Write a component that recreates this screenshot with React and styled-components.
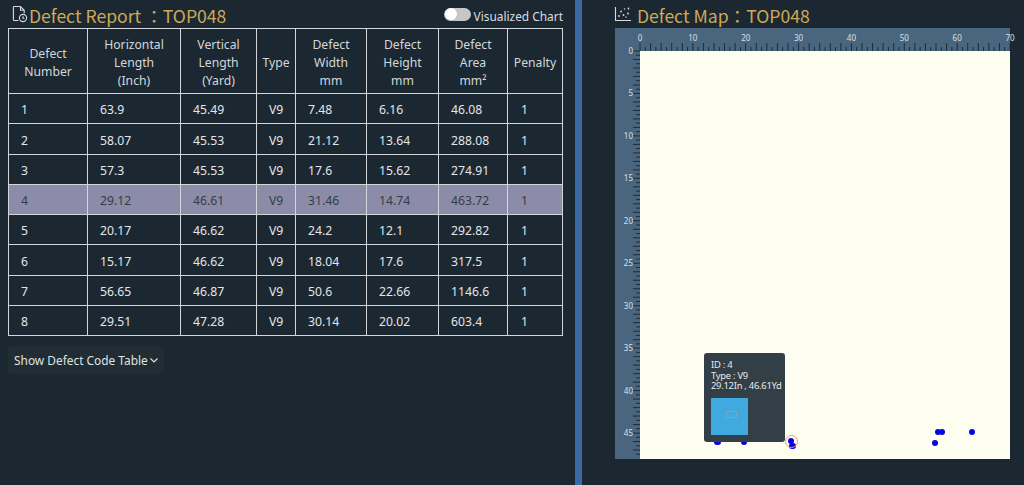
import React from "react";
import styled, { createGlobalStyle } from "styled-components";

const Global = createGlobalStyle`
  html, body { margin: 0; padding: 0; background: #1b2832; overflow: hidden; }
  body { font-family: "Noto Sans", "Noto Sans CJK TC", "Open Sans", sans-serif; }
`;

const Page = styled.div`
  display: flex;
  width: 1024px;
  height: 485px;
  background: #1b2832;
  color: #dfe3e6;
`;
const LeftPanel = styled.section`
  width: 575px;
  box-sizing: border-box;
  padding-left: 8px;
  padding-right: 12px;
`;
const Divider = styled.div`
  width: 7px;
  background: #3a6aa3;
`;
const RightPanel = styled.section`
  flex: 1;
  padding-left: 32px;
`;
const HeaderRow = styled.div`
  display: flex;
  align-items: center;
  justify-content: space-between;
  height: 28px;
`;
const TitleGroup = styled.div`
  display: flex;
  align-items: center;
  padding-left: ${(p) => p.$inset || 0}px;
  gap: ${(p) => p.$gap || 0}px;
`;
const Title = styled.h2`
  margin: 0;
  font-family: "Noto Sans CJK TC", "Noto Sans", sans-serif;
  font-size: 17.6px;
  font-weight: 400;
  line-height: 28px;
  color: #cfa957;
  white-space: pre;
  padding-top: 4px;
`;
const ToggleGroup = styled.label`
  display: flex;
  align-items: center;
  gap: 3px;
  font-size: 11.9px;
  color: #d9dee1;
`;
const ToggleText = styled.span`
  margin-top: 3px;
`;
const Toggle = styled.span`
  display: flex;
  align-items: center;
  width: 27px;
  height: 13px;
  border-radius: 7px;
  background: #c4c6c8;
  padding-left: 1px;
  box-sizing: border-box;
`;
const Knob = styled.span`
  width: 12px;
  height: 12px;
  border-radius: 50%;
  background: #fff;
`;
const Table = styled.table`
  border-collapse: collapse;
  table-layout: fixed;
  width: 554px;
  font-size: 12.2px;
`;
const Th = styled.th`
  border: 1px solid #d3d7da;
  font-weight: 400;
  height: 65px;
  padding: 3px 0 0;
  box-sizing: border-box;
  line-height: 18px;
  color: #d2d7da;
  text-align: center;
`;
const Td = styled.td`
  border: 1px solid #d3d7da;
  height: ${(p) => p.$h - 2}px;
  padding: 2px 0 0 ${(p) => p.$pad || 12}px;
  color: inherit;
`;
const Tr = styled.tr`
  background: ${(p) => (p.$active ? "#8d8ca8" : "transparent")};
  color: ${(p) => (p.$active ? "#323c48" : "#e3e6e8")};
`;
const ShowButton = styled.button`
  display: flex;
  align-items: center;
  gap: 1px;
  margin-top: 10px;
  height: 28px;
  padding: 0 5px 0 6px;
  border: 0;
  border-radius: 3px;
  background: #222c33;
  color: #dfe3e6;
  font: inherit;
  font-size: 11.9px;
`;
const MapGrid = styled.div`
  display: grid;
  grid-template-columns: 25px 370px;
  grid-template-rows: 23px 408px;
  width: 395px;
  margin-left: 1px;
  background: #4a667f;
`;
const Corner = styled.div``;
const RulerSvg = styled.svg`
  display: block;
  overflow: visible;
`;
const Plot = styled.div`
  position: relative;
  background: #fdfeef;
`;
const Dot = styled.span`
  position: absolute;
  width: 6.5px;
  height: 6.5px;
  margin: -3.25px 0 0 -3.25px;
  border-radius: 50%;
  background: #0606e0;
`;
const Ring = styled.span`
  position: absolute;
  width: 11px;
  height: 11px;
  margin: -6.5px 0 0 -6.5px;
  border: 1px solid #d9a08c;
  border-radius: 50%;
`;
const Tooltip = styled.div`
  position: absolute;
  left: 64px;
  top: 302px;
  width: 81px;
  height: 89px;
  box-sizing: border-box;
  padding: 7px 0 0 7px;
  border-radius: 3px;
  background: #333f46;
  color: #e6e9ea;
  font-size: 9.4px;
  letter-spacing: -0.25px;
  line-height: 10.5px;
  white-space: nowrap;
`;
const TipImage = styled.div`
  display: flex;
  align-items: center;
  justify-content: center;
  width: 37px;
  height: 37px;
  margin-top: 6.5px;
  background: #3fa9e0;
`;
const TipMark = styled.span`
  width: 9px;
  height: 5px;
  margin-top: -4px;
  margin-left: 4px;
  border: 1px solid #7fa5bd;
`;

const cols = [79, 93, 76, 39, 71, 72, 69, 55];
const rowHeights = [29, 30, 29, 29, 29, 30, 29, 29];
const headers = [
  ["Defect", "Number"],
  ["Horizontal", "Length", "(Inch)"],
  ["Vertical", "Length", "(Yard)"],
  ["Type"],
  ["Defect", "Width", "mm"],
  ["Defect", "Height", "mm"],
  ["Defect", "Area", "mm²"],
  ["Penalty"],
];
const rows = [
  [1, 63.9, 45.49, "V9", 7.48, 6.16, 46.08, 1],
  [2, 58.07, 45.53, "V9", 21.12, 13.64, 288.08, 1],
  [3, 57.3, 45.53, "V9", 17.6, 15.62, 274.91, 1],
  [4, 29.12, 46.61, "V9", 31.46, 14.74, 463.72, 1],
  [5, 20.17, 46.62, "V9", 24.2, 12.1, 292.82, 1],
  [6, 15.17, 46.62, "V9", 18.04, 17.6, 317.5, 1],
  [7, 56.65, 46.87, "V9", 50.6, 22.66, 1146.6, 1],
  [8, 29.51, 47.28, "V9", 30.14, 20.02, 603.4, 1],
];
const dots = [
  [972, 432], [938, 432], [942, 432], [935, 443],
  [717.5, 442], [744, 441.5], [791, 441], [792.5, 446],
];

const range = (n) => Array.from({ length: n }, (_, i) => i);
const UX = 370 / 70;
const UY = 8.49;

function TopRuler() {
  return (
    <RulerSvg width="370" height="23" viewBox="0 0 370 23">
      {range(71).map((i) => {
        const len = i % 2 === 0 ? 8 : 4;
        return <line key={i} x1={i * UX} x2={i * UX} y1={23} y2={23 - len} stroke="#1d2c3a" strokeWidth="1" />;
      })}
      {range(8).map((i) => (
        <text key={i} x={i * 10 * UX} y={13} fontSize="8" fill="#d8e0e6" textAnchor="middle" fontFamily="Noto Sans, sans-serif">
          {i * 10}
        </text>
      ))}
    </RulerSvg>
  );
}

function LeftRuler() {
  return (
    <RulerSvg width="25" height="408" viewBox="0 0 25 408">
      {range(96).map((i) => {
        const len = i % 2 === 0 ? 7 : 4;
        const y = i * (UY / 2);
        return <line key={i} x1={25} x2={25 - len} y1={y} y2={y} stroke="#1d2c3a" strokeWidth="1" />;
      })}
      {range(10).map((i) => (
        <text key={i} x={18} y={i * 5 * UY + 3} fontSize="8" fill="#d8e0e6" textAnchor="end" fontFamily="Noto Sans, sans-serif">
          {i * 5}
        </text>
      ))}
    </RulerSvg>
  );
}

function ReportIcon() {
  return (
    <svg width="18" height="18" viewBox="0 0 18 18" fill="none" stroke="#d5d9dc" strokeWidth="1.1">
      <path d="M7.5 15.5H3.2a.8.8 0 0 1-.8-.8V2.3a.8.8 0 0 1 .8-.8h6.3l3.7 3.8v3" />
      <path d="M9.5 1.5v3.8h3.7" />
      <circle cx="12" cy="13" r="3.6" />
      <path d="M12 11.2v1.9l1.4.6" />
    </svg>
  );
}
function MapIcon() {
  return (
    <svg width="18" height="18" viewBox="0 0 18 18" fill="none" stroke="#d5d9dc">
      <path d="M1.5 2v13.5H17" strokeWidth="1.1" />
      <g fill="#d5d9dc" stroke="none">
        <circle cx="5" cy="11" r="0.9" />
        <circle cx="7" cy="6.5" r="0.9" />
        <circle cx="9.5" cy="10" r="0.9" />
        <circle cx="10.5" cy="4" r="0.7" />
        <circle cx="14" cy="8.5" r="0.9" />
        <circle cx="14.5" cy="3.5" r="0.9" />
        <circle cx="12" cy="12" r="0.7" />
      </g>
    </svg>
  );
}
function Chevron() {
  return (
    <svg width="10" height="10" viewBox="0 0 10 10" fill="none" stroke="#dfe3e6" strokeWidth="1.1">
      <path d="M1.5 3.5 5 7l3.5-3.5" />
    </svg>
  );
}

export default function App() {
  return (
    <Page>
      <Global />
      <LeftPanel>
        <HeaderRow>
          <TitleGroup $inset={3}>
            <ReportIcon />
            <Title>Defect Report ：TOP048</Title>
          </TitleGroup>
          <ToggleGroup>
            <Toggle>
              <Knob />
            </Toggle>
            <ToggleText>Visualized Chart</ToggleText>
          </ToggleGroup>
        </HeaderRow>
        <Table>
          <colgroup>
            {cols.map((w, i) => (
              <col key={i} style={{ width: w }} />
            ))}
          </colgroup>
          <thead>
            <tr>
              {headers.map((lines, i) => (
                <Th key={i}>
                  {lines.map((l, j) => (
                    <React.Fragment key={j}>
                      {j > 0 && <br />}
                      {l}
                    </React.Fragment>
                  ))}
                </Th>
              ))}
            </tr>
          </thead>
          <tbody>
            {rows.map((r, ri) => (
              <Tr key={r[0]} $active={r[0] === 4}>
                {r.map((v, i) => (
                  <Td key={i} $h={rowHeights[ri]} $pad={i === 7 ? 13 : 12}>
                    {v}
                  </Td>
                ))}
              </Tr>
            ))}
          </tbody>
        </Table>
        <ShowButton>
          Show Defect Code Table
          <Chevron />
        </ShowButton>
      </LeftPanel>
      <Divider />
      <RightPanel>
        <HeaderRow>
          <TitleGroup $gap={5}>
            <MapIcon />
            <Title>Defect Map：TOP048</Title>
          </TitleGroup>
        </HeaderRow>
        <MapGrid>
          <Corner />
          <TopRuler />
          <LeftRuler />
          <Plot>
            {dots.map(([x, y], i) => (
              <Dot key={i} style={{ left: x - 640, top: y - 51 }} />
            ))}
            <Ring style={{ left: 151, top: 390 }} />
            <Tooltip>
              ID : 4
              <br />
              Type : V9
              <br />
              29.12In , 46.61Yd
              <TipImage>
                <TipMark />
              </TipImage>
            </Tooltip>
          </Plot>
        </MapGrid>
      </RightPanel>
    </Page>
  );
}
